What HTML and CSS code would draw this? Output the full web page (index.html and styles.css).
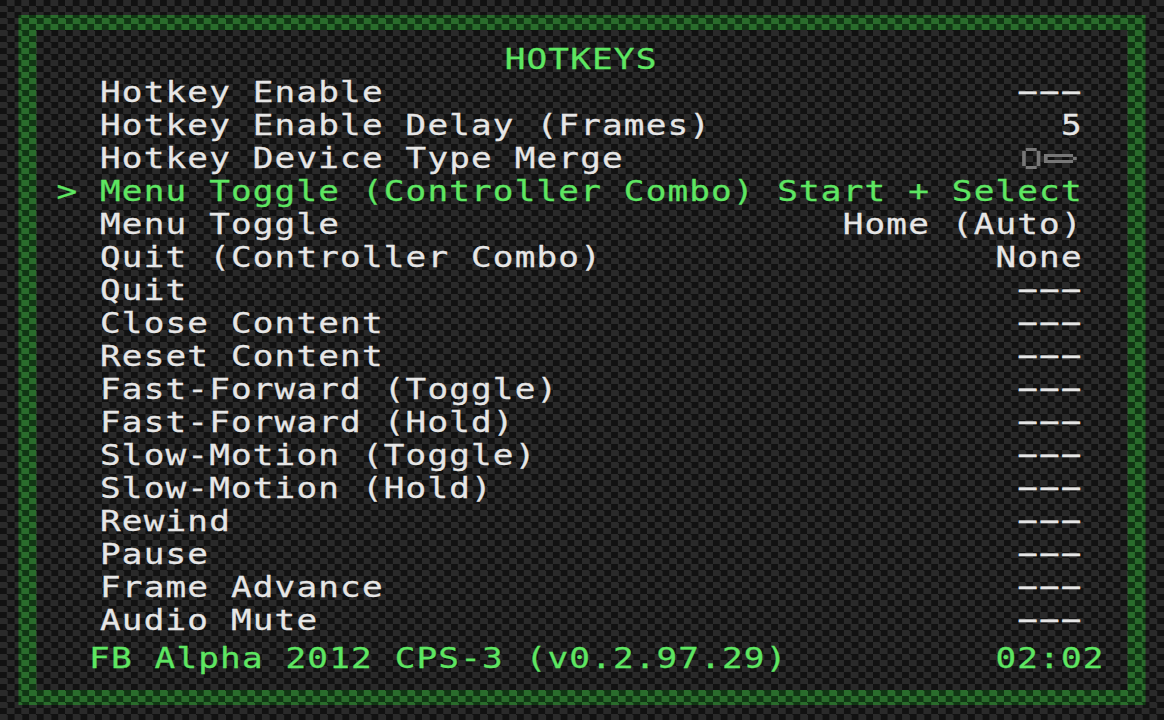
FILE: index.html
```html
<!DOCTYPE html>
<html lang="en">
<head>
<meta charset="utf-8">
<title>Hotkeys</title>
<link rel="stylesheet" href="styles.css">
</head>
<body>
<main class="screen">
<div class="frame">
<h1 class="title">HOTKEYS</h1>
<ul class="menu">
<li class="row"><span>Hotkey Enable</span><span class="value"><i class="unset">---</i></span></li>
<li class="row"><span>Hotkey Enable Delay (Frames)</span><span class="value">5</span></li>
<li class="row"><span>Hotkey Device Type Merge</span><svg class="toggle" viewBox="0 0 18 11"><path d="M2 2.5h3M2 8.5h3M1.5 3v5M5.5 3v5M7 4.5h8M7 6.5h8M7.5 5v1M15.5 5v1"/></svg></li>
<li class="row selected"><span>Menu Toggle (Controller Combo)</span><span class="value">Start + Select</span></li>
<li class="row"><span>Menu Toggle</span><span class="value">Home (Auto)</span></li>
<li class="row"><span>Quit (Controller Combo)</span><span class="value">None</span></li>
<li class="row"><span>Quit</span><span class="value"><i class="unset">---</i></span></li>
<li class="row"><span>Close Content</span><span class="value"><i class="unset">---</i></span></li>
<li class="row"><span>Reset Content</span><span class="value"><i class="unset">---</i></span></li>
<li class="row"><span>Fast-Forward (Toggle)</span><span class="value"><i class="unset">---</i></span></li>
<li class="row"><span>Fast-Forward (Hold)</span><span class="value"><i class="unset">---</i></span></li>
<li class="row"><span>Slow-Motion (Toggle)</span><span class="value"><i class="unset">---</i></span></li>
<li class="row"><span>Slow-Motion (Hold)</span><span class="value"><i class="unset">---</i></span></li>
<li class="row"><span>Rewind</span><span class="value"><i class="unset">---</i></span></li>
<li class="row"><span>Pause</span><span class="value"><i class="unset">---</i></span></li>
<li class="row"><span>Frame Advance</span><span class="value"><i class="unset">---</i></span></li>
<li class="row"><span>Audio Mute</span><span class="value"><i class="unset">---</i></span></li>
</ul>
<footer class="status"><span>FB Alpha 2012 CPS-3 (v0.2.97.29)</span><span>02:02</span></footer>
</div>
</main>
</body>
</html>
```
FILE: styles.css
```css
body { margin: 0; background: #111; overflow: hidden; }

.screen {
  box-sizing: border-box;
  width: 960px;
  height: 720px;
  padding: 15px;
  transform: scaleX(1.2125);
  transform-origin: 0 0;
  background: repeating-conic-gradient(#2a2a2a 0 25%, #111 0 50%) 0 0 / 12px 12px;
  font: 28.3px/33px "DejaVu Sans Mono", monospace;
  letter-spacing: 0.963px;
  color: #e6e6e6;
  -webkit-text-stroke: 0.3px currentColor;
}

.frame {
  position: relative;
  box-sizing: border-box;
  height: 690px;
  padding: 28px 54px 0 67.5px;
}

.frame::before {
  content: "";
  position: absolute;
  inset: 0;
  background: repeating-conic-gradient(#2a6c2c 0 25%, #103513 0 50%) -3px -3px / 12px 12px;
  clip-path: polygon(0 0, 100% 0, 100% 100%, 0 100%, 0 0, 15px 15px, 15px 675px, 915px 675px, 915px 15px, 15px 15px);
}

.title {
  margin: 0;
  padding-right: 15px;
  font: inherit;
  text-align: center;
  color: #5ee662;
}

.menu { margin: 0; padding: 0; list-style: none; }
.row { position: relative; display: flex; justify-content: space-between; height: 33px; white-space: pre; }
.value { margin-right: -2px; }
.selected { color: #5ee662; }
.selected::before { content: ">"; position: absolute; left: -36px; }

/* dashes of an unassigned hotkey fill the whole character cell */
.unset {
  display: inline-block;
  height: 33px;
  margin-right: 25.6px;
  vertical-align: top;
  font-style: normal;
  letter-spacing: -7.57px;
  transform: translate(-7.7px, -1.5px) scaleX(1.9);
  transform-origin: 0 0;
  -webkit-text-stroke-width: 0.6px;
}

.toggle { width: 54px; height: 33px; margin: 0 -3px 0 0; fill: none; stroke: #777; }

.status {
  display: flex;
  justify-content: space-between;
  margin: 5px -20px 0 -9px;
  white-space: pre;
  color: #5ee662;
}
```
